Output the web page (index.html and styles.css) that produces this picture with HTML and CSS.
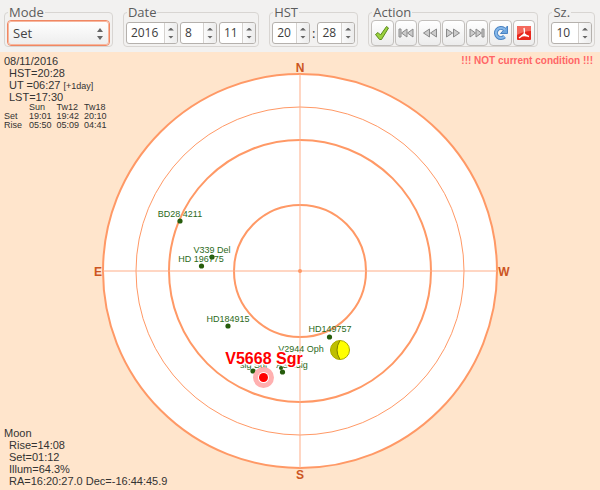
FILE: index.html
```
<!DOCTYPE html>
<html lang="en">
<head>
<meta charset="utf-8">
<title>Sky chart</title>
<link rel="stylesheet" href="styles.css">
</head>
<body>
<form class="toolbar">
  <fieldset class="group mode">
    <legend>Mode</legend>
    <div class="controls">
      <div class="picker">
        <select aria-label="Mode"><option>Set</option></select>
        <svg class="picker-arrows" viewBox="0 0 6 12" aria-hidden="true"><path d="M0 4L3 0L6 4ZM0 8H6L3 12Z"/></svg>
      </div>
    </div>
  </fieldset>
  <fieldset class="group date">
    <legend>Date</legend>
    <div class="controls">
      <span class="spin year"><input type="number" aria-label="Year" value="2016"><span class="steps"><button type="button" class="up" aria-label="Next year"></button><button type="button" class="down" aria-label="Previous year"></button></span></span>
      <span class="spin"><input type="number" aria-label="Month" value="8"><span class="steps"><button type="button" class="up" aria-label="Next month"></button><button type="button" class="down" aria-label="Previous month"></button></span></span>
      <span class="spin"><input type="number" aria-label="Day" value="11"><span class="steps"><button type="button" class="up" aria-label="Next day"></button><button type="button" class="down" aria-label="Previous day"></button></span></span>
    </div>
  </fieldset>
  <fieldset class="group time">
    <legend>HST</legend>
    <div class="controls">
      <span class="spin"><input type="number" aria-label="Hour" value="20"><span class="steps"><button type="button" class="up" aria-label="Next hour"></button><button type="button" class="down" aria-label="Previous hour"></button></span></span>
      <span>:</span>
      <span class="spin"><input type="number" aria-label="Minute" value="28"><span class="steps"><button type="button" class="up" aria-label="Next minute"></button><button type="button" class="down" aria-label="Previous minute"></button></span></span>
    </div>
  </fieldset>
  <fieldset class="group action">
    <legend>Action</legend>
    <div class="controls buttons">
      <button type="button" class="tool" aria-label="Apply"><svg viewBox="0 0 16 16"><path d="M1.500 9.500L4 7.500L6.500 10L12.500 1.500L14.500 3L7.500 14.500H5.500Z" fill="#9bd13f" stroke="#5a8a1c"/></svg></button>
      <button type="button" class="tool" aria-label="First"><svg viewBox="0 0 16 16" class="nav"><path d="M1 4H3V12H1ZM9 4V12L3.500 8ZM15 4V12L9.500 8Z"/></svg></button>
      <button type="button" class="tool" aria-label="Back"><svg viewBox="0 0 16 16" class="nav"><path d="M7.500 4V12L1.500 8ZM14.500 4V12L8.500 8Z"/></svg></button>
      <button type="button" class="tool" aria-label="Forward"><svg viewBox="0 0 16 16" class="nav"><path d="M1.500 4V12L7.500 8ZM8.500 4V12L14.500 8Z"/></svg></button>
      <button type="button" class="tool" aria-label="Last"><svg viewBox="0 0 16 16" class="nav"><path d="M1 4V12L6.500 8ZM7 4V12L12.500 8ZM13 4H15V12H13Z"/></svg></button>
      <button type="button" class="tool" aria-label="Refresh"><svg viewBox="0 0 16 16"><path d="M11.500 11.500A5 5 0 1 1 11 4" fill="none" stroke="#4a83c2" stroke-width="4"/><path d="M14.500 1V8.500H7.500Z" fill="#6ea6df" stroke="#4a83c2"/><path d="M11.500 11.500A5 5 0 1 1 12 5" fill="none" stroke="#86b8ea" stroke-width="2"/></svg></button>
      <button type="button" class="tool" aria-label="Save as PDF"><svg viewBox="0 0 16 16"><rect x="1" y="1" width="14" height="14" rx="1" fill="#e8271d"/><path d="M1 2Q1 1 2 1H14Q15 1 15 2V6Q8 6 1 10Z" fill="#f4685c"/><path d="M8 3Q9 7 8 9Q6 11 3 13M8 8.500Q10 11 13 11.500M5 11Q8 10 12 11" fill="none" stroke="#fff" stroke-width="1.400"/></svg></button>
    </div>
  </fieldset>
  <fieldset class="group size">
    <legend>Sz.</legend>
    <div class="controls">
      <span class="spin"><input type="number" aria-label="Size" value="10"><span class="steps"><button type="button" class="up" aria-label="Larger"></button><button type="button" class="down" aria-label="Smaller"></button></span></span>
    </div>
  </fieldset>
</form>
<main class="sky">
  <svg class="chart" viewBox="0 0 600 438" role="img" aria-label="Sky map">
    <g class="rings">
      <circle class="horizon" cx="300" cy="219" r="197"/>
      <circle class="thin" cx="300" cy="219" r="164"/>
      <circle cx="300" cy="219" r="131"/>
      <circle cx="300" cy="219" r="66"/>
      <path class="axis" d="M300 22V416M103 219H497"/>
    </g>
    <circle class="zenith" cx="300" cy="219" r="2"/>
    <g class="compass">
      <text x="300" y="20">N</text><text x="300" y="427">S</text>
      <text x="98" y="224">E</text><text x="504" y="224">W</text>
    </g>
    <g class="stars">
      <circle cx="180" cy="169" r="2.600"/><circle cx="212" cy="205" r="2.600"/>
      <circle cx="201.500" cy="214" r="2.600"/><circle cx="228" cy="274" r="2.600"/>
      <circle cx="329.500" cy="285" r="2.600"/><circle cx="253" cy="319" r="2.600"/>
      <circle cx="282.500" cy="320" r="2.600"/><circle cx="281" cy="316" r="2"/>
    </g>
    <g class="names">
      <text x="180" y="165">BD28 4211</text>
      <text x="212" y="201">V339 Del</text>
      <text x="201" y="210">HD 196775</text>
      <text x="228" y="270">HD184915</text>
      <text x="330" y="280">HD149757</text>
      <text x="301" y="300">V2944 Oph</text>
      <text x="254" y="316">sig Sgr</text>
      <text x="292" y="316">AS 25ig</text>
    </g>
    <circle cx="340" cy="298" r="9.500" fill="#ff0"/>
    <path d="M340 288.500A9.500 9.500 0 0 0 340 307.500Q334 298 340 288.500Z" fill="#bebe00"/>
    <path d="M340 288.500Q334 298 340 307.500" fill="none" stroke="#808000"/>
    <circle cx="340" cy="298" r="9.500" fill="none" stroke="#aaaa00"/>
    <circle cx="263.500" cy="325.500" r="8" fill="#fff" stroke="#ffb0b0" stroke-width="5"/>
    <circle cx="263.500" cy="325.500" r="4.500" fill="#f00"/>
    <text class="target" x="264" y="312">V5668 Sgr</text>
  </svg>
  <section class="info now">
    <p>08/11/2016</p>
    <p class="in">HST=20:28</p>
    <p class="in">UT =06:27 <small>[+1day]</small></p>
    <p class="in">LST=17:30</p>
    <table>
      <tr><td></td><th>Sun</th><th>Tw12</th><th>Tw18</th></tr>
      <tr><th>Set</th><td>19:01</td><td>19:42</td><td>20:10</td></tr>
      <tr><th>Rise</th><td>05:50</td><td>05:09</td><td>04:41</td></tr>
    </table>
  </section>
  <p class="warning">!!! NOT current condition !!!</p>
  <section class="info moon">
    <p>Moon</p>
    <p class="in">Rise=14:08</p>
    <p class="in">Set=01:12</p>
    <p class="in">Illum=64.3%</p>
    <p class="in">RA=16:20:27.0 Dec=-16:44:45.9</p>
  </section>
</main>
</body>
</html>
```
FILE: styles.css
```
* { box-sizing: border-box; }
body { margin: 0; background: #ffe5cc; color: #333; font-family: "Liberation Sans", Arial, sans-serif; }
p { margin: 0; }

.toolbar { display: flex; gap: 10px; padding: 4px 5px 5px 4px; background: #f2f1f0; font: 13px/16px "Open Sans", "Noto Sans", sans-serif; }
.group { min-width: 0; margin: 0; padding: 0 2px; border: 1px solid #d8d5d2; border-radius: 4px; flex: 1 1 0; }
.group legend { margin-left: 1px; padding: 0 1px; color: #5c5c5c; }
.mode { flex-grow: 109; }
.date { flex-grow: 138; }
.time { flex-grow: 88; }
.action { flex-grow: 174; }
.size { flex-grow: 43; }
.controls { display: flex; align-items: center; gap: 2px; height: 26px; }

.picker { position: relative; flex: 1; }
.picker select { appearance: none; display: block; width: 100%; height: 26px; padding: 0 5px; border: 1px solid #f08763; border-radius: 4px; background: linear-gradient(#fff, #ededed); color: #444; font: inherit; outline: 1px solid #f7b79e; outline-offset: -2px; }
.picker-arrows { position: absolute; right: 7px; top: 8px; width: 6px; height: 12px; fill: #666; pointer-events: none; }

.spin { display: flex; flex: 1; min-width: 0; height: 22px; border: 1px solid #b5b1ad; border-radius: 3px; background: #fff; overflow: hidden; }
.year { flex: 0 0 52px; }
.spin input { appearance: textfield; flex: 1; width: 0; min-width: 0; padding: 0 0 0 4px; border: 0; background: none; color: #3c3c3c; font: 12px/20px "Open Sans", "Noto Sans", sans-serif; outline: 0; }
.spin input::-webkit-inner-spin-button { display: none; }
.steps { display: flex; flex-direction: column; justify-content: center; gap: 5px; width: 13px; border-left: 1px solid #d5d2cf; background: linear-gradient(90deg, #fafafa, #ececec); align-items: center; }
.steps button { width: 6px; height: 3px; padding: 0; border: 0; background: #666; }
.up { clip-path: polygon(50% 0, 100% 100%, 0 100%); }
.down { clip-path: polygon(0 0, 100% 0, 50% 100%); }

.buttons { gap: 1px; }
.tool { display: flex; flex: 1; min-width: 0; height: 26px; padding: 0; align-items: center; justify-content: center; border: 1px solid #c2bfbc; border-radius: 4px; background: linear-gradient(#fff, #ececec); }
.tool svg { width: 16px; height: 16px; }
.nav { fill: #ccc; stroke: #8a8a8a; }

.sky { position: relative; }
.chart { display: block; width: 100%; }
.rings circle { fill: #fff; stroke: #ff9966; stroke-width: 2; }
.rings .thin { stroke-width: 1; }
.axis { stroke: #ffad87; stroke-width: 1; }
.zenith { fill: #ff9966; }
.compass { fill: #cc5522; font: bold 12px "Liberation Sans", sans-serif; text-anchor: middle; }
.stars { fill: #265c0c; }
.names { fill: #2c6a20; font-size: 9px; text-anchor: middle; }
.target { fill: #f00; stroke: #fff; stroke-width: 3px; paint-order: stroke; font: bold 16px "Liberation Sans", sans-serif; text-anchor: middle; }

.info { position: absolute; left: 4px; font-size: 11px; line-height: 12px; }
.now { top: 3px; }
.moon { bottom: 3px; }
.info .in { padding-left: 5px; }
.info small { font-size: 9px; line-height: 9px; }
.info table { border-collapse: collapse; font-size: 9px; line-height: 9px; }
.info th, .info td { padding: 0 5px 0 0; font-weight: normal; text-align: left; }
.info th:first-child { padding-right: 7px; }
.warning { position: absolute; top: 3px; right: 7px; color: #ff6666; font-size: 10px; line-height: 12px; font-weight: bold; }
```
